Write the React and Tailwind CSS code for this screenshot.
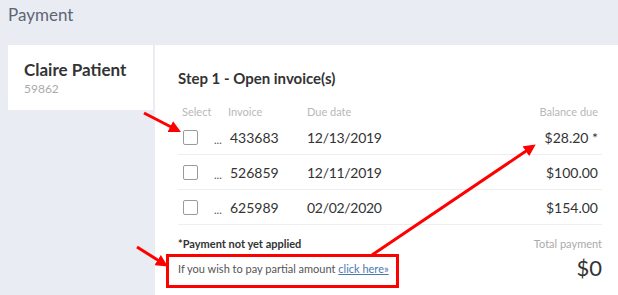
import React from 'react';

const invoices = [
  { id: '433683', due: '12/13/2019', balance: '$28.20 *' },
  { id: '526859', due: '12/11/2019', balance: '$100.00' },
  { id: '625989', due: '02/02/2020', balance: '$154.00' },
];

const Arrows = () => (
  <svg className="absolute inset-0 pointer-events-none" width="618" height="295" viewBox="0 0 618 295">
    <defs>
      <marker id="head" markerWidth="4" markerHeight="4" refX="2.5" refY="2" orient="auto" markerUnits="strokeWidth">
        <path d="M0,0 L4,2 L0,4 z" fill="#ff0000" />
      </marker>
    </defs>
    <line x1="144" y1="113" x2="177" y2="130" stroke="#ff0000" strokeWidth="3" markerEnd="url(#head)" />
    <line x1="137" y1="247" x2="164" y2="264" stroke="#ff0000" strokeWidth="3" markerEnd="url(#head)" />
    <line x1="372" y1="255" x2="532" y2="147" stroke="#ff0000" strokeWidth="3" markerEnd="url(#head)" />
    <rect x="167.5" y="255.5" width="230" height="31" fill="none" stroke="#ff0000" strokeWidth="3" />
  </svg>
);

export default function App() {
  return (
    <div className="relative w-[618px] h-[295px] overflow-hidden bg-[#e9ecf3] font-['Lato','Liberation_Sans',sans-serif] text-[#333]">
      <div className="h-[45px] pl-2 pt-[5px] text-[17px] leading-5 text-[#5d6573]">Payment</div>

      <div className="flex gap-[2px] pl-2">
        <div className="w-[145px] h-[65px] bg-white pl-4 pt-[15px] self-start">
          <div className="text-[17px] font-bold leading-5 text-[#333]">Claire Patient</div>
          <div className="text-[12px] leading-4 text-[#aaa] mt-[1px]">59862</div>
        </div>

        <div className="flex-1 h-[250px] bg-white pl-[23px] pr-[16px] pt-[23px]">
          <div className="text-[15px] font-bold leading-5 text-[#333]">Step 1 - Open invoice(s)</div>

          <div className="flex items-center h-[14px] mt-[17px] text-[11px] text-[#b8b8b8]">
            <span className="w-[50px] pl-[4px]">Select</span>
            <span className="w-[79px]">Invoice</span>
            <span className="flex-1">Due date</span>
            <span className="pr-[4px]">Balance due</span>
          </div>

          <div className="mt-[2px]">
            {invoices.map((inv, i) => (
              <div key={inv.id} className={`flex items-center border-b border-[#eeeeee] ${i === 0 ? 'h-[34px]' : 'h-[35px]'}`}>
                <span className="w-[36px] pl-[5px]">
                  <span className="block w-[15px] h-[15px] border border-[#9a9a9a] rounded-[2px]" />
                </span>
                <span className="w-[16px] text-[11px] text-[#555] leading-none pt-[4px]">...</span>
                <span className="w-[77px] text-[14px]">{inv.id}</span>
                <span className="flex-1 text-[14px] tracking-[-0.3px]">{inv.due}</span>
                <span className="text-[14px] pr-[4px]">{inv.balance}</span>
              </div>
            ))}
          </div>

          <div className="flex justify-between mt-[13px]">
            <div>
              <div className="text-[11px] font-bold leading-3 text-[#333]">*Payment not yet applied</div>
              <div className="text-[11px] leading-3 text-[#555] mt-[13px]">
                If you wish to pay partial amount <span className="text-[#4a78b0] underline">click here»</span>
              </div>
            </div>
            <div className="text-right">
              <div className="text-[11px] leading-3 text-[#aaa]">Total payment</div>
              <div className="text-[22px] leading-6 text-[#333] mt-[6px]">$0</div>
            </div>
          </div>
        </div>
      </div>

      <Arrows />
    </div>
  );
}
